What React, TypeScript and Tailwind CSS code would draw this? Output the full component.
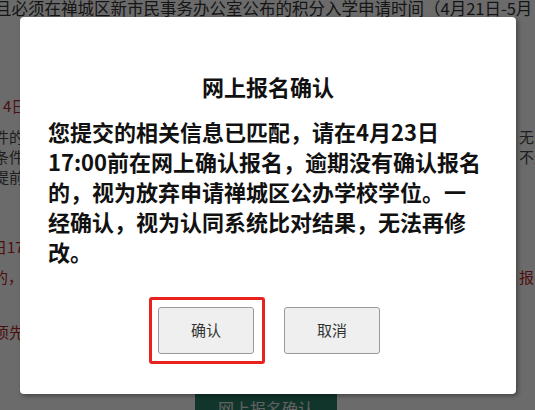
const font = "font-['Noto_Sans_CJK_SC','Microsoft_YaHei','Noto_Sans',sans-serif]";

type Row = {
  mt: string;
  left?: string;
  leftShift?: string;
  right?: string;
  red?: boolean;
  rightRed?: boolean;
};

const rows: Row[] = [
  { mt: "mt-[78px]", left: "4日", leftShift: "ml-[3px]", red: true },
  { mt: "mt-[11px]", left: "件的", leftShift: "-ml-[6px]", right: "无须" },
  { mt: "mt-0", left: "条件", leftShift: "-ml-[6px]", right: "不过" },
  { mt: "mt-0", left: "提前", leftShift: "-ml-[6px]" },
  { mt: "mt-[50px]", left: "日17", leftShift: "-ml-[8px]", red: true },
  { mt: "mt-[10px]", left: "的，", leftShift: "-ml-[7px]", red: true, right: "报名", rightRed: true },
  { mt: "mt-[35px]", left: "须先", leftShift: "-ml-[6px]", red: true },
];

function PageBehind() {
  return (
    <div className="flex flex-col text-[15px] leading-[20px] text-[#4a4a4a]">
      <div className="-mt-[2px] h-[20px] overflow-hidden whitespace-nowrap text-[16.5px] -ml-[5px] text-[#333]">
        且必须在禅城区新市民事务办公室公布的积分入学申请时间（4月21日-5月
      </div>
      {rows.map((r, i) => (
        <div key={i} className={`${r.mt} flex h-[20px]`}>
          <div className="w-[20px] overflow-hidden whitespace-nowrap">
            <span className={`${r.leftShift} inline-block ${r.red ? "text-[#b82828]" : ""}`}>{r.left}</span>
          </div>
          <div className="flex-1" />
          <div className="w-[18px] overflow-hidden whitespace-nowrap">
            <span className={`inline-block ml-[2px] ${r.rightRed ? "text-[#b82828]" : ""}`}>{r.right}</span>
          </div>
        </div>
      ))}
      <div className="mt-[49px] flex justify-center pr-[3px]">
        <div className="w-[142px] h-[34px] bg-[#2a7f66] text-[#e8e8e8] text-[16px] leading-[34px] text-center">
          网上报名确认
        </div>
      </div>
    </div>
  );
}

export default function App() {
  return (
    <div className={`relative w-[535px] h-[410px] overflow-hidden bg-white ${font}`}>
      <PageBehind />
      <div className="absolute inset-0 bg-black/[0.58]" />
      <div className="absolute left-[20px] top-[17px] w-[496px] h-[377px] rounded-[4px] bg-white shadow-[2px_2px_4px_rgba(0,0,0,0.35)] flex flex-col pt-[54px] px-[28px]">
        <h2 className="text-center text-[22px] leading-[30px] font-bold text-[#111]">网上报名确认</h2>
        <p className="mt-[15px] text-[22px] leading-[30px] font-bold text-[#111] whitespace-nowrap">
          您提交的相关信息已匹配，请在4月23日
          <br />
          17:00前在网上确认报名，逾期没有确认报名
          <br />
          的，视为放弃申请禅城区公办学校学位。一
          <br />
          经确认，视为认同系统比对结果，无法再修
          <br />
          改。
        </p>
        <div className="mt-[41px] flex justify-center gap-[30px] pl-[2px]">
          <div className="relative">
            <button className="w-[96px] h-[47px] rounded-[3px] border border-[#9a9a9a] bg-[#efefef] text-[15px] text-[#333]">
              确认
            </button>
            <div className="pointer-events-none absolute -left-[9px] -right-[11px] -top-[10px] -bottom-[10px] rounded-[3px] border-[3px] border-[#e8231f]" />
          </div>
          <button className="w-[96px] h-[47px] rounded-[3px] border border-[#9a9a9a] bg-[#efefef] text-[15px] text-[#333]">
            取消
          </button>
        </div>
      </div>
    </div>
  );
}
